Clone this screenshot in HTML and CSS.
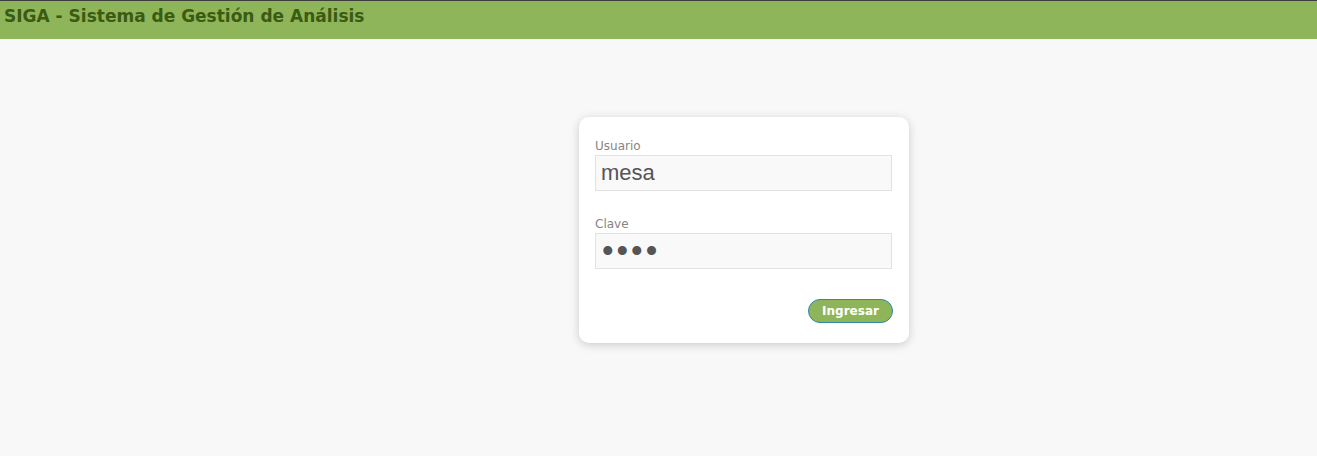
FILE: index.html
```html
<!DOCTYPE html>
<html lang="es">
<head>
<meta charset="utf-8">
<title>SIGA</title>
<link rel="stylesheet" href="styles.css">
</head>
<body>
<header class="topbar">
  <h1 class="title">SIGA - Sistema de Gestión de Análisis</h1>
</header>
<main class="stage">
  <form class="card">
    <label class="field">
      <span class="label">Usuario</span>
      <input class="input input-user" type="text" value="mesa">
    </label>
    <label class="field">
      <span class="label">Clave</span>
      <input class="input input-pass" type="password" value="mesa">
    </label>
    <div class="actions">
      <button class="btn" type="button">Ingresar</button>
    </div>
  </form>
</main>
</body>
</html>
```
FILE: styles.css
```css
html, body {
  margin: 0;
  padding: 0;
  background: #f8f8f8;
  height: 100%;
}
.topbar {
  border-top: 1px solid #3d3d3d;
  background: #8eb559;
  height: 39px;
  padding: 0 4px;
  box-sizing: border-box;
}
.title {
  margin: 0;
  font-family: "DejaVu Sans", Verdana, sans-serif;
  font-weight: bold;
  font-size: 17px;
  line-height: 30px;
  color: #3b5a12;
}
.stage {
  padding-top: 78px;
  padding-left: 579px;
}
.card {
  width: 330px;
  box-sizing: border-box;
  background: #fff;
  border-radius: 10px;
  box-shadow: 0 2px 10px rgba(0,0,0,0.18);
  padding: 20px 16px 20px 16px;
  display: flex;
  flex-direction: column;
  margin: 0;
}
.field {
  display: flex;
  flex-direction: column;
  margin-bottom: 24px;
}
.field + .field {
  margin-bottom: 30px;
}
.label {
  font-family: "DejaVu Sans", Verdana, sans-serif;
  font-size: 12px;
  line-height: 18px;
  color: #858585;
}
.input {
  width: 297px;
  height: 36px;
  box-sizing: border-box;
  border: 1px solid #e2e2e2;
  background: #f9f9f9;
  padding: 0 5px;
  color: #555;
  font-family: "Liberation Sans", Arial, sans-serif;
  font-size: 22px;
  outline: none;
  margin: 0;
}
.input-pass {
  font-size: 33px;
  letter-spacing: 3px;
  padding-left: 6px;
}
.actions {
  display: flex;
  justify-content: flex-end;
}
.btn {
  height: 24px;
  width: 85px;
  border-radius: 12px;
  border: 1px solid #2f8aa6;
  background: #8eb559;
  color: #fff;
  font-family: "DejaVu Sans", Verdana, sans-serif;
  font-weight: bold;
  font-size: 12px;
  padding: 0;
  margin-right: 0;
  cursor: pointer;
}
```
